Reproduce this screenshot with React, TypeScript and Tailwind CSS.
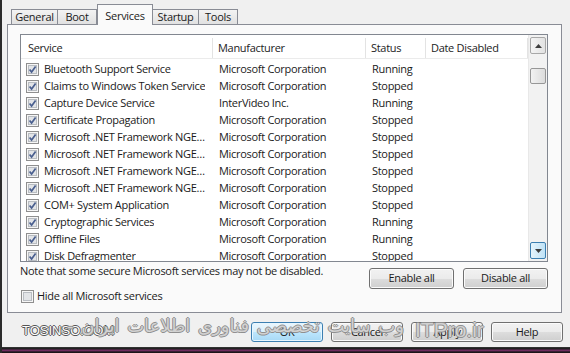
import React from 'react';

const services = [
    { name: 'Bluetooth Support Service', maker: 'Microsoft Corporation', status: 'Running' },
    { name: 'Claims to Windows Token Service', maker: 'Microsoft Corporation', status: 'Stopped' },
    { name: 'Capture Device Service', maker: 'InterVideo Inc.', status: 'Running' },
    { name: 'Certificate Propagation', maker: 'Microsoft Corporation', status: 'Stopped' },
    { name: 'Microsoft .NET Framework NGEN v2.0.50727_X86', maker: 'Microsoft Corporation', status: 'Stopped' },
    { name: 'Microsoft .NET Framework NGEN v2.0.50727_X64', maker: 'Microsoft Corporation', status: 'Stopped' },
    { name: 'Microsoft .NET Framework NGEN v4.0.30319_X86', maker: 'Microsoft Corporation', status: 'Stopped' },
    { name: 'Microsoft .NET Framework NGEN v4.0.30319_X64', maker: 'Microsoft Corporation', status: 'Stopped' },
    { name: 'COM+ System Application', maker: 'Microsoft Corporation', status: 'Stopped' },
    { name: 'Cryptographic Services', maker: 'Microsoft Corporation', status: 'Running' },
    { name: 'Offline Files', maker: 'Microsoft Corporation', status: 'Running' },
    { name: 'Disk Defragmenter', maker: 'Microsoft Corporation', status: 'Stopped' },
];

const CheckBox = ({ checked }: { checked: boolean }) => (
    <svg width="13" height="13" viewBox="0 0 13 13" className="shrink-0">
        <rect x="0.5" y="0.5" width="12" height="12" fill="#f6f6f6" stroke="#8f8f8f" />
        <rect x="2.5" y="2.5" width="8" height="8" fill="#e2e4e7" stroke="#b9bdc2" />
        {checked && <path d="M3.6 6.4 L5.6 9.1 L9.6 3.4" stroke="#4a5f8f" strokeWidth="1.7" fill="none" />}
    </svg>
);

const Arrow = ({ up }: { up: boolean }) => (
    <svg width="7" height="4" viewBox="0 0 7 4">
        <path d={up ? 'M0 4 L3.5 0 L7 4 Z' : 'M0 0 L3.5 4 L7 0 Z'} fill="#3d3d3d" />
    </svg>
);

const btn =
    'flex items-center justify-center rounded-[3px] border border-[#707070] bg-[linear-gradient(#f2f2f2_0%,#ebebeb_50%,#dddddd_50%,#cfcfcf_100%)] shadow-[inset_0_0_0_1px_#fbfbfb] text-[#1a1a1a]';

const tabs = [
    { label: 'General', w: 'w-[47px]' },
    { label: 'Boot', w: 'w-[40px]' },
    { label: 'Services', w: 'w-[56px]', active: true },
    { label: 'Startup', w: 'w-[47px]' },
    { label: 'Tools', w: 'w-[40px]' },
];

const outline = '[text-shadow:1px_0_#8f8f8f,-1px_0_#8f8f8f,0_1px_#8f8f8f,0_-1px_#8f8f8f]';

export default function App() {
    return (
        <div className="relative flex h-[353px] w-[570px] flex-col overflow-hidden border-l-2 border-[#2b2b2b] bg-[#f0f0f0] font-[Open_Sans,sans-serif] text-[11px] tracking-[-0.3px] text-[#1a1a1a]">
            {/* tabs */}
            <div className="relative z-10 flex h-[24px] items-end pl-[9px]">
                {tabs.map((t) =>
                    t.active ? (
                        <div
                            key={t.label}
                            className={`${t.w} -mb-px flex h-[21px] items-start justify-center border border-b-0 border-[#898c95] bg-[#fafafa] pt-[3px]`}
                        >
                            {t.label}
                        </div>
                    ) : (
                        <div
                            key={t.label}
                            className={`${t.w} -ml-px flex h-[15px] items-center justify-center border border-b-0 border-[#898c95] bg-[linear-gradient(#f3f3f3,#e1e1e1)] pt-[1px] first:ml-0`}
                        >
                            {t.label}
                        </div>
                    ),
                )}
            </div>

            {/* tab page */}
            <div className="ml-[5px] flex h-[289px] w-[555px] flex-col border border-[#898c95] bg-[#fafafa] pl-[12px] pt-[9px]">
                <div className="flex h-[228px] w-[528px] border border-[#828790] bg-white">
                    <div className="flex w-[507px] flex-col overflow-hidden">
                        <div className="flex h-[24px] shrink-0 border-b border-[#ebebeb] pt-[3px] text-[#222]">
                            <div className="flex w-[192px] items-center border-r border-[#e3e3e3] pl-[7px]">Service</div>
                            <div className="flex w-[153px] items-center border-r border-[#e3e3e3] pl-[5px]">Manufacturer</div>
                            <div className="flex w-[60px] items-center border-r border-[#e3e3e3] pl-[5px]">Status</div>
                            <div className="flex w-[102px] items-center border-r border-[#e3e3e3] pl-[5px]">Date Disabled</div>
                        </div>
                        <div className="pt-[2px]">
                            {services.map((s) => (
                                <div key={s.name} className="flex h-[17px] items-center">
                                    <div className="flex w-[192px] items-center gap-[5px] pl-[5px]">
                                        <CheckBox checked />
                                        <span className="truncate">{s.name}</span>
                                    </div>
                                    <div className="w-[153px] pl-[6px]">{s.maker}</div>
                                    <div className="w-[60px] pl-[6px]">{s.status}</div>
                                    <div className="w-[102px]" />
                                </div>
                            ))}
                        </div>
                    </div>
                    {/* scrollbar */}
                    <div className="flex w-[19px] flex-col items-center border-l border-[#e8e8e8] bg-[#f2f2f2] py-[2px]">
                        <div className="flex h-[17px] w-[16px] items-center justify-center rounded-[2px] border border-[#a8a8a8] bg-[linear-gradient(90deg,#f4f4f4,#e2e2e2)]">
                            <Arrow up />
                        </div>
                        <div className="mt-[14px] h-[16px] w-[16px] rounded-[2px] border border-[#979797] bg-[linear-gradient(90deg,#f2f2f2,#dcdcdc)]" />
                        <div className="flex-1" />
                        <div className="flex h-[17px] w-[16px] items-center justify-center rounded-[2px] border border-[#3c7fb1] bg-[linear-gradient(90deg,#e6f4fc,#bfe2f6)]">
                            <Arrow up={false} />
                        </div>
                    </div>
                </div>

                <div className="flex h-[27px] w-[528px] items-start justify-between">
                    <span className="mt-[1px]">Note that some secure Microsoft services may not be disabled.</span>
                    <div className="mt-[6px] flex gap-[9px]">
                        <div className={`${btn} h-[21px] w-[85px]`}>Enable all</div>
                        <div className={`${btn} h-[21px] w-[85px]`}>Disable all</div>
                    </div>
                </div>
                <div className="flex h-[14px] items-center gap-[3px] pl-[1px]">
                    <CheckBox checked={false} />
                    <span>Hide all Microsoft services</span>
                </div>
            </div>

            {/* dialog buttons */}
            <div className="mt-[9px] flex justify-end gap-[8px] pr-[7px]">
                <div className="flex h-[20px] w-[72px] items-center justify-center rounded-[3px] border border-[#3c7fb1] bg-[linear-gradient(#eaf6fd_0%,#d9f0fc_50%,#bee6fd_50%,#a7d9f5_100%)] shadow-[inset_0_0_0_1px_#e6f6ff]">
                    OK
                </div>
                <div className={`${btn} h-[20px] w-[72px]`}>Cancel</div>
                <div className={`${btn} h-[20px] w-[72px]`}>Apply</div>
                <div className={`${btn} h-[20px] w-[72px]`}>Help</div>
            </div>

            <div className="mt-auto h-[6px] bg-[linear-gradient(#3a3a3a_0%,#1c1c1c_30%,#7b2f68_55%,#2a1a26_80%,#111_100%)]" />

            {/* watermark */}
            <span className="pointer-events-none absolute left-[20px] top-[324px] font-[Liberation_Sans,sans-serif] text-[13px] leading-none tracking-normal text-white [text-shadow:1px_0_#555,-1px_0_#555,0_1px_#555,0_-1px_#555]">
                TOSINSO.COM
            </span>
            <span
                dir="rtl"
                className={`pointer-events-none absolute right-[166px] top-[317px] whitespace-nowrap font-[DejaVu_Sans,sans-serif] text-[18px] leading-none tracking-normal [word-spacing:2px] text-white/60 ${outline}`}
            >
                وب سایت تخصصی فناوری اطلاعات ایران -
            </span>
            <span
                className={`pointer-events-none absolute left-[413px] top-[319px] font-[Liberation_Sans,sans-serif] text-[21px] leading-none tracking-normal text-white/60 ${outline}`}
            >
                ITPro.ir
            </span>
        </div>
    );
}
